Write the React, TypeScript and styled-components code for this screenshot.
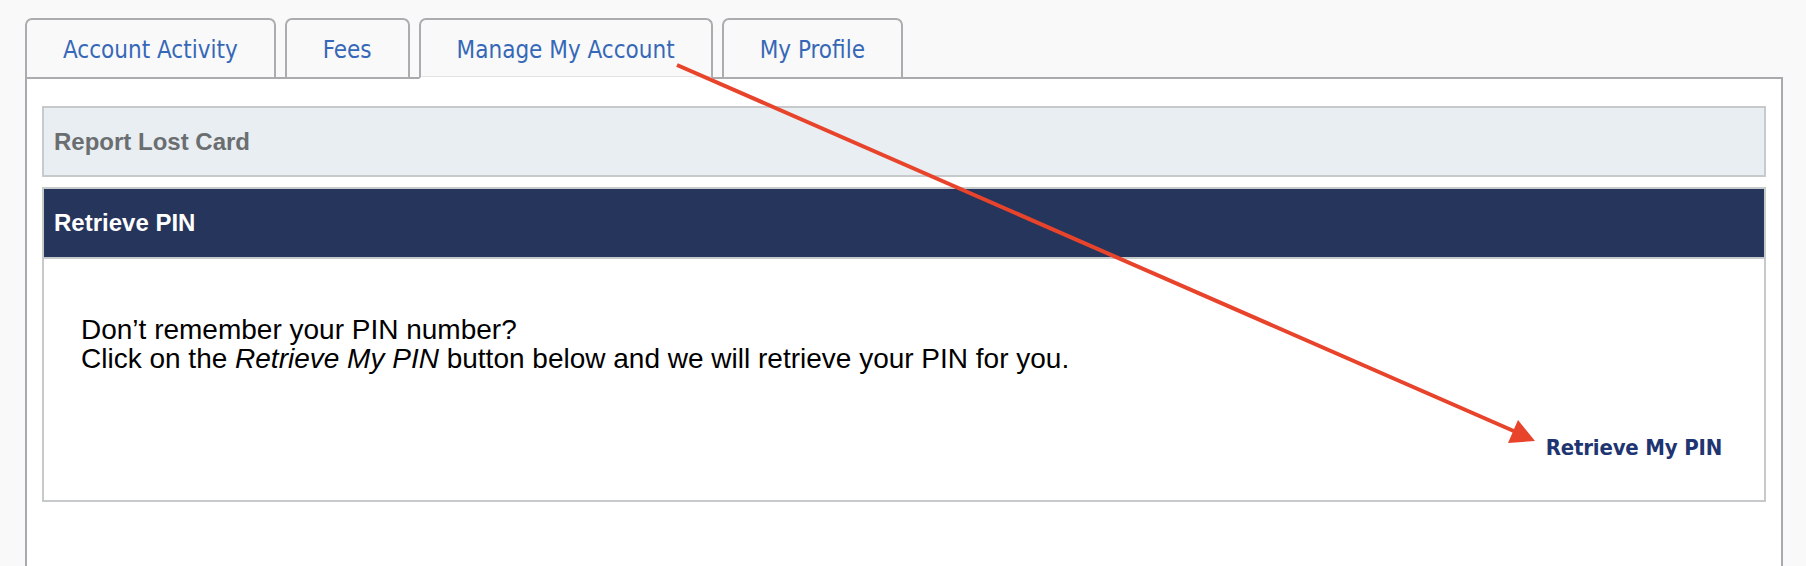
import React from "react";
import styled, { createGlobalStyle } from "styled-components";

const GlobalStyle = createGlobalStyle`
  html, body {
    margin: 0;
    padding: 0;
    background: #f9f9f9;
  }
  * { box-sizing: border-box; }
`;

const Page = styled.div`
  position: relative;
  height: 566px;
  padding: 18px 23px 0 25px;
  display: flex;
  flex-direction: column;
  overflow: hidden;
  background: #f9f9f9;
`;

const TabBar = styled.div`
  display: flex;
  align-items: flex-end;
  gap: 9px;
  margin-bottom: -2px;
  position: relative;
  z-index: 1;
`;

const Tab = styled.div<{ $active?: boolean }>`
  height: 61px;
  padding: 2px 36px 0;
  display: flex;
  align-items: center;
  border: 2px solid #aaacaf;
  border-bottom-color: ${(p) => (p.$active ? "#ffffff" : "#aaacaf")};
  border-radius: 7px 7px 0 0;
  background: #f9f9f9;
  box-shadow: ${(p) => (p.$active ? "inset 0 -1px 0 #e3e3e3" : "none")};
  font-family: "DejaVu Sans Condensed", "DejaVu Sans", sans-serif;
  font-size: 24px;
  color: #3668b7;
  white-space: nowrap;
  cursor: pointer;
`;

const Panel = styled.div`
  flex: 1;
  background: #ffffff;
  border: 2px solid #a8aaad;
  border-bottom: none;
  padding: 27px 15px 0 15px;
  display: flex;
  flex-direction: column;
  gap: 10px;
`;

const CollapsedSection = styled.div`
  height: 71px;
  display: flex;
  align-items: center;
  padding-left: 10px;
  background: #e9eef2;
  border: 2px solid #c6cacb;
  font-family: "Liberation Sans", Arial, sans-serif;
  font-weight: bold;
  font-size: 24px;
  color: #6b6e70;
`;

const Section = styled.div`
  border: 2px solid #c6cacb;
  background: #ffffff;
  display: flex;
  flex-direction: column;
`;

const SectionHeader = styled.div`
  height: 70px;
  display: flex;
  align-items: center;
  padding-left: 10px;
  background: #26355c;
  border-bottom: 2px solid #c6cacb;
  font-family: "Liberation Sans", Arial, sans-serif;
  font-weight: bold;
  font-size: 24px;
  color: #ffffff;
`;

const SectionBody = styled.div`
  height: 241px;
  padding: 56px 42px 39px 37px;
  display: flex;
  flex-direction: column;
`;

const BodyText = styled.p`
  margin: 0;
  font-family: "Liberation Sans", Arial, sans-serif;
  font-size: 28px;
  line-height: 29px;
  color: #000000;
`;

const ButtonRow = styled.div`
  margin-top: auto;
  display: flex;
  justify-content: flex-end;
`;

const LinkButton = styled.button`
  background: none;
  border: none;
  padding: 0;
  font-family: "DejaVu Sans Condensed", "DejaVu Sans", sans-serif;
  font-weight: bold;
  font-size: 22px;
  letter-spacing: -0.2px;
  line-height: 26px;
  color: #1f3571;
  cursor: pointer;
`;

const ArrowOverlay = styled.svg`
  position: absolute;
  left: 0;
  top: 0;
  width: 1806px;
  height: 566px;
  pointer-events: none;
  z-index: 5;
`;

export default function App() {
  const tabs = ["Account Activity", "Fees", "Manage My Account", "My Profile"];
  return (
    <>
      <GlobalStyle />
      <Page>
        <TabBar>
          {tabs.map((t) => (
            <Tab key={t} $active={t === "Manage My Account"}>
              {t}
            </Tab>
          ))}
        </TabBar>
        <Panel>
          <CollapsedSection>Report Lost Card</CollapsedSection>
          <Section>
            <SectionHeader>Retrieve PIN</SectionHeader>
            <SectionBody>
              <BodyText>
                Don’t remember your PIN number?
                <br />
                Click on the <em>Retrieve My PIN</em> button below and we will
                retrieve your PIN for you.
              </BodyText>
              <ButtonRow>
                <LinkButton>Retrieve My PIN</LinkButton>
              </ButtonRow>
            </SectionBody>
          </Section>
        </Panel>
        <ArrowOverlay viewBox="0 0 1806 566">
          <line
            x1="677"
            y1="65"
            x2="1516"
            y2="432"
            stroke="#e8432b"
            strokeWidth="4"
          />
          <polygon points="1535,441 1518,420 1508,443" fill="#e8432b" />
        </ArrowOverlay>
      </Page>
    </>
  );
}
